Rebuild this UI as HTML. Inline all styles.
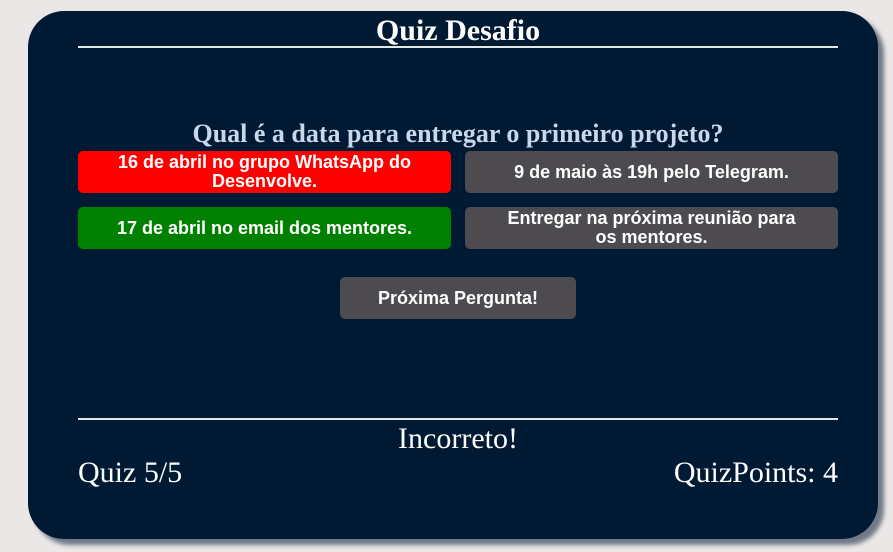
<!DOCTYPE html>
<html><head><meta charset="utf-8"><style>
html,body{margin:0;padding:0;}
body{width:893px;height:552px;background:#ebe7e6;position:relative;overflow:hidden;font-family:"Liberation Serif",serif;}
.card{position:absolute;left:28px;top:11px;width:850px;height:528px;background:#001a33;border-radius:36px;box-shadow:6px 6px 4px rgba(60,75,95,0.7);}
.abs{position:absolute;}
.title{left:0;width:916px;top:14px;text-align:center;color:#fff;font-weight:bold;font-size:30px;}
.line{left:78px;width:760px;height:2px;background:#e6e6e6;}
.q{left:0;width:916px;top:119px;text-align:center;color:#c9d7ea;font-weight:bold;font-size:26px;}
.btn{position:absolute;height:42px;border-radius:5px;color:#fff;font-family:"Liberation Sans",sans-serif;font-weight:bold;font-size:18px;display:flex;align-items:center;justify-content:center;text-align:center;line-height:19px;}
.g{background:#4d4b50;}
.t{color:#fff;font-size:30px;}
</style></head><body>
<div class="card"></div>
<div class="abs title">Quiz Desafio</div>
<div class="abs line" style="top:46px"></div>
<div class="abs q">Qual é a data para entregar o primeiro projeto?</div>
<div class="btn" style="left:78px;top:151px;width:373px;background:#ff0000;"><span style="width:310px">16 de abril no grupo WhatsApp do Desenvolve.</span></div>
<div class="btn g" style="left:465px;top:151px;width:373px;">9 de maio às 19h pelo Telegram.</div>
<div class="btn" style="left:78px;top:207px;width:373px;background:#008000;">17 de abril no email dos mentores.</div>
<div class="btn g" style="left:465px;top:207px;width:373px;"><span style="width:300px">Entregar na próxima reunião para os mentores.</span></div>
<div class="btn g" style="left:340px;top:277px;width:236px;">Próxima Pergunta!</div>
<div class="abs line" style="top:418px"></div>
<div class="abs t" style="left:0;width:916px;text-align:center;top:422px;">Incorreto!</div>
<div class="abs t" style="left:78px;top:456px;">Quiz 5/5</div>
<div class="abs t" style="right:55px;top:456px;">QuizPoints: 4</div>
</body></html>
